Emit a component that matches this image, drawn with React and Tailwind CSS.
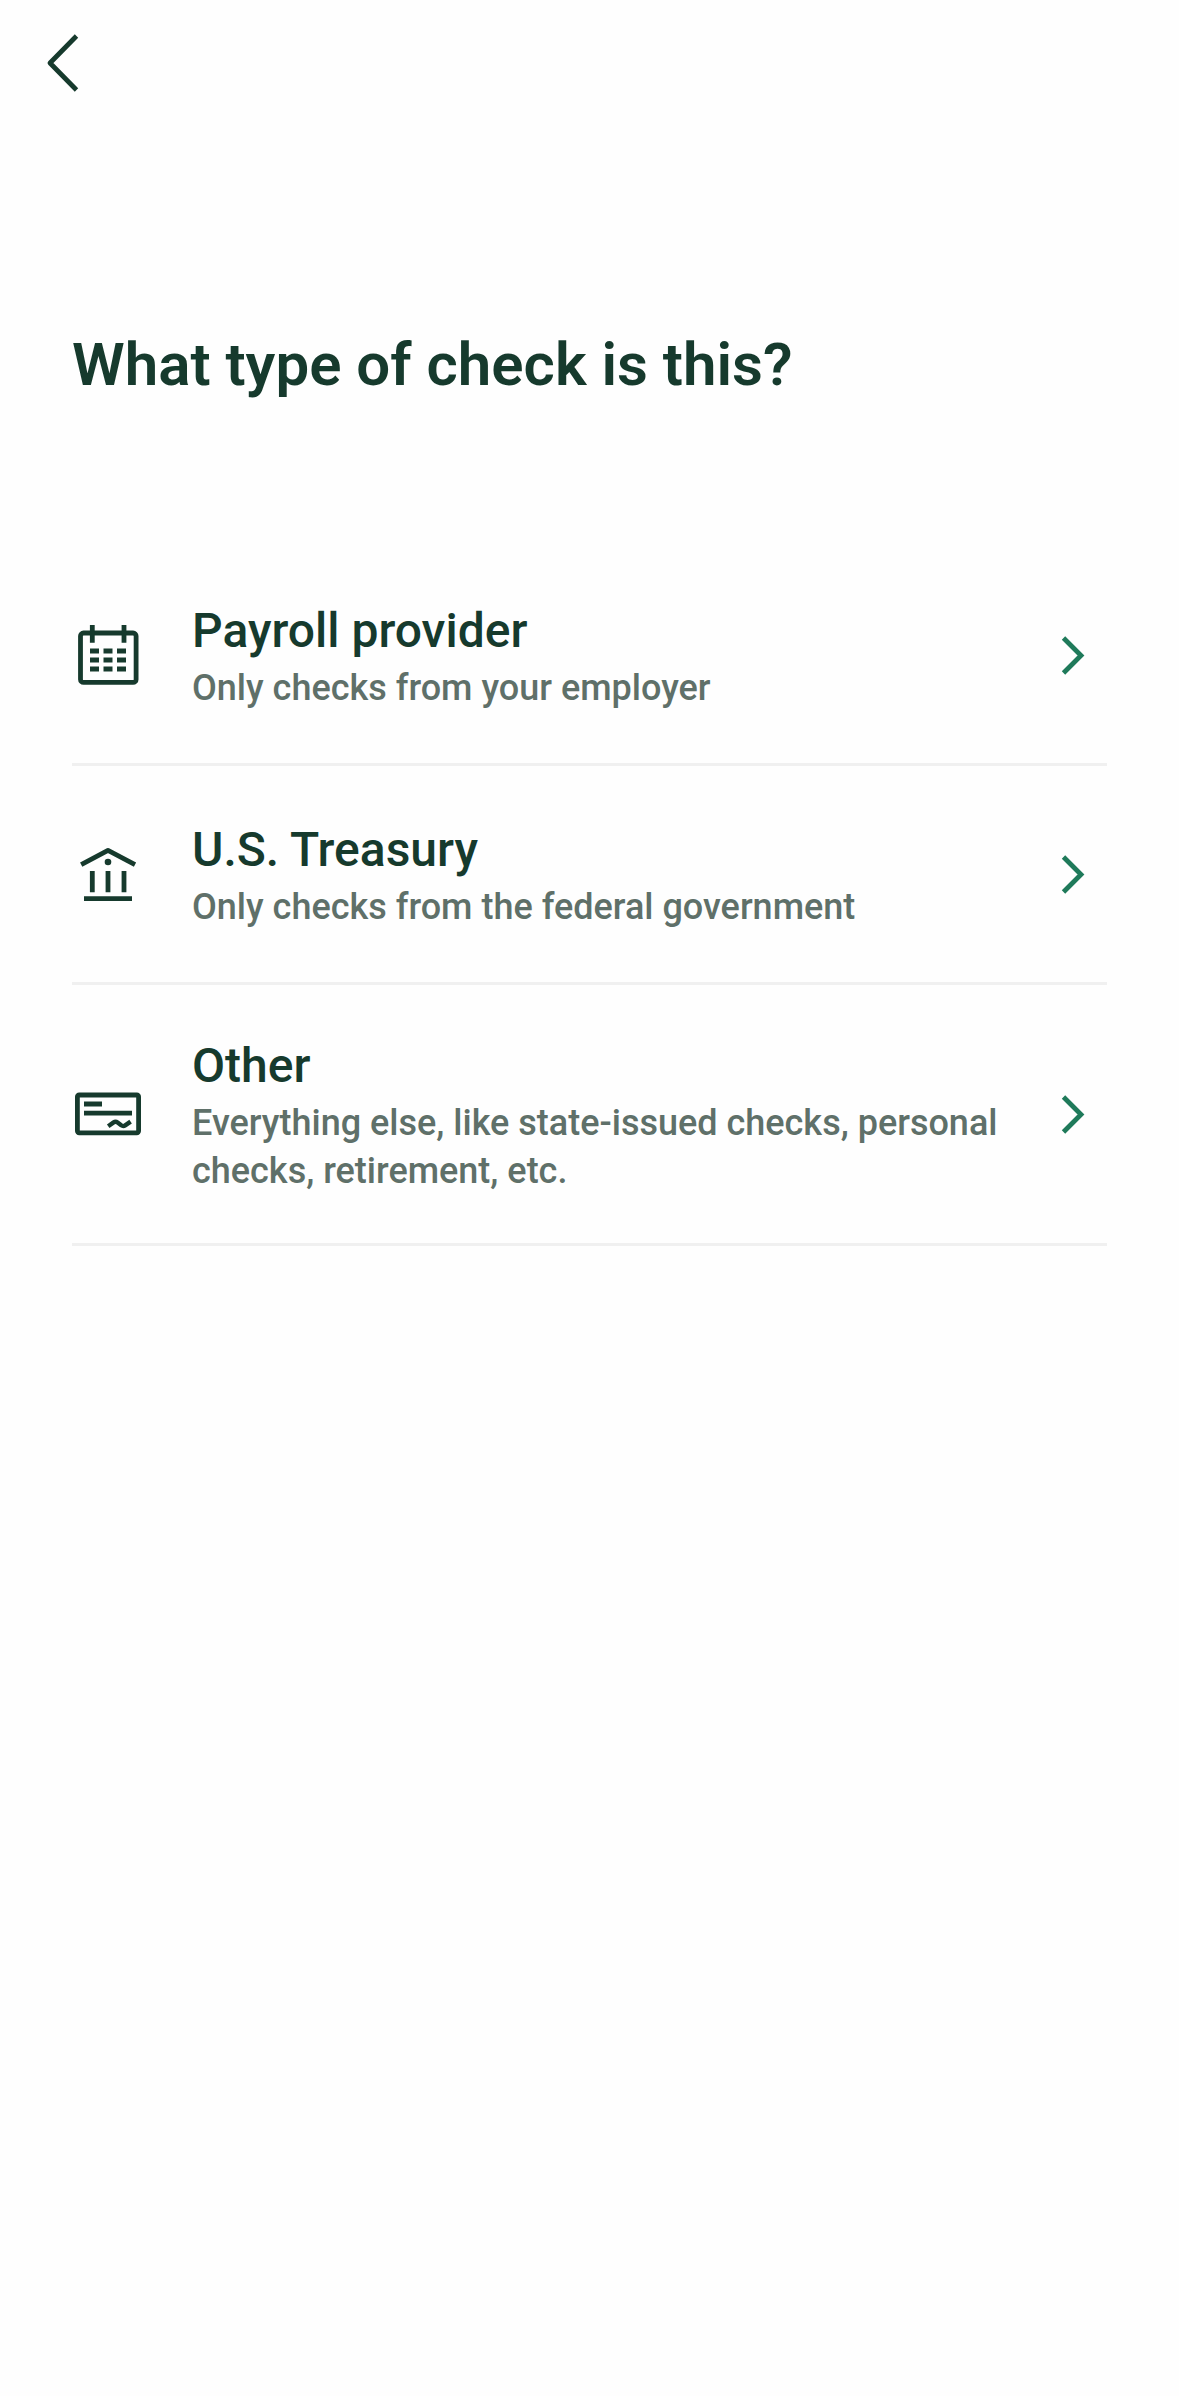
function CalendarIcon() {
  return (
    <svg viewBox="0 0 72 72" className="size-[72px] shrink-0" fill="none" stroke="currentColor" strokeWidth="4.8" aria-hidden="true">
      <rect x="8.5" y="14" width="55.6" height="49.4" rx="3" />
      <path d="M20.3 6v17.7M52 6v17.7" />
      <path d="M18 32h9M31.5 32h9M45 32h9M18 41h9M31.5 41h9M45 41h9M18 50h9M31.5 50h9M45 50h9" />
    </svg>
  );
}

function TreasuryIcon() {
  return (
    <svg viewBox="0 0 72 72" className="size-[72px] shrink-0" fill="none" stroke="currentColor" strokeWidth="4.8" aria-hidden="true">
      <path d="M9.2 26.6 36 12.4l27 14.2" strokeLinejoin="round" />
      <circle cx="36" cy="24" r="3.3" fill="currentColor" stroke="none" />
      <path d="M20.3 33v21.3M36 33v21.3M52 33v21.3M12 60.7h48" />
    </svg>
  );
}

function CheckIcon() {
  return (
    <svg viewBox="0 0 72 72" className="size-[72px] shrink-0" fill="none" stroke="currentColor" strokeWidth="4.8" aria-hidden="true">
      <rect x="5.4" y="17" width="61.2" height="37.8" rx="1.8" />
      <path d="M12 26h18M12 35.2h48" />
      <path d="M36.2 48.2l5.4-3.8q2-1.3 4 .2l3.6 2.7q2 1.4 4 .1l5.4-3.8" strokeWidth="4.4" />
    </svg>
  );
}

function ChevronIcon() {
  return (
    <svg viewBox="0 0 72 72" className="size-[72px] shrink-0 text-[#1f7a5a]" fill="none" stroke="currentColor" strokeWidth="4.8" aria-hidden="true">
      <path d="M28.5 19 46 36.5 28.5 54" />
    </svg>
  );
}

const options = [
  { title: "Payroll provider", detail: "Only checks from your employer", Icon: CalendarIcon },
  { title: "U.S. Treasury", detail: "Only checks from the federal government", Icon: TreasuryIcon },
  { title: "Other", detail: "Everything else, like state-issued checks, personal checks, retirement, etc.", Icon: CheckIcon },
];

export default function App() {
  return (
    <div className="min-h-screen bg-[#fefefe] font-['Roboto',sans-serif] text-[#163a2d]">
      <header className="p-6">
        <button type="button" aria-label="Back" className="block">
          <svg viewBox="0 0 78 78" className="size-[78px]" fill="none" stroke="currentColor" strokeWidth="4.8" aria-hidden="true">
            <path d="M52.5 12 26 39l26.5 27" strokeLinejoin="round" />
          </svg>
        </button>
      </header>
      <main className="px-[72px] pt-[203px]">
        <h1 className="text-[60px] leading-[72px] font-semibold">What type of check is this?</h1>
        <ul className="mt-[146px]">
          {options.map(({ title, detail, Icon }) => (
            <li key={title} className="border-b-3 border-[#f0f0f0]">
              <button type="button" className="flex min-h-[216px] w-full items-center py-12 text-left">
                <Icon />
                <span className="ml-12 flex-1">
                  <span className="block text-[48px] leading-[66px] font-medium">{title}</span>
                  <span className="block text-[36px] leading-12 font-medium text-[#5f7069]">{detail}</span>
                </span>
                <ChevronIcon />
              </button>
            </li>
          ))}
        </ul>
      </main>
    </div>
  );
}
